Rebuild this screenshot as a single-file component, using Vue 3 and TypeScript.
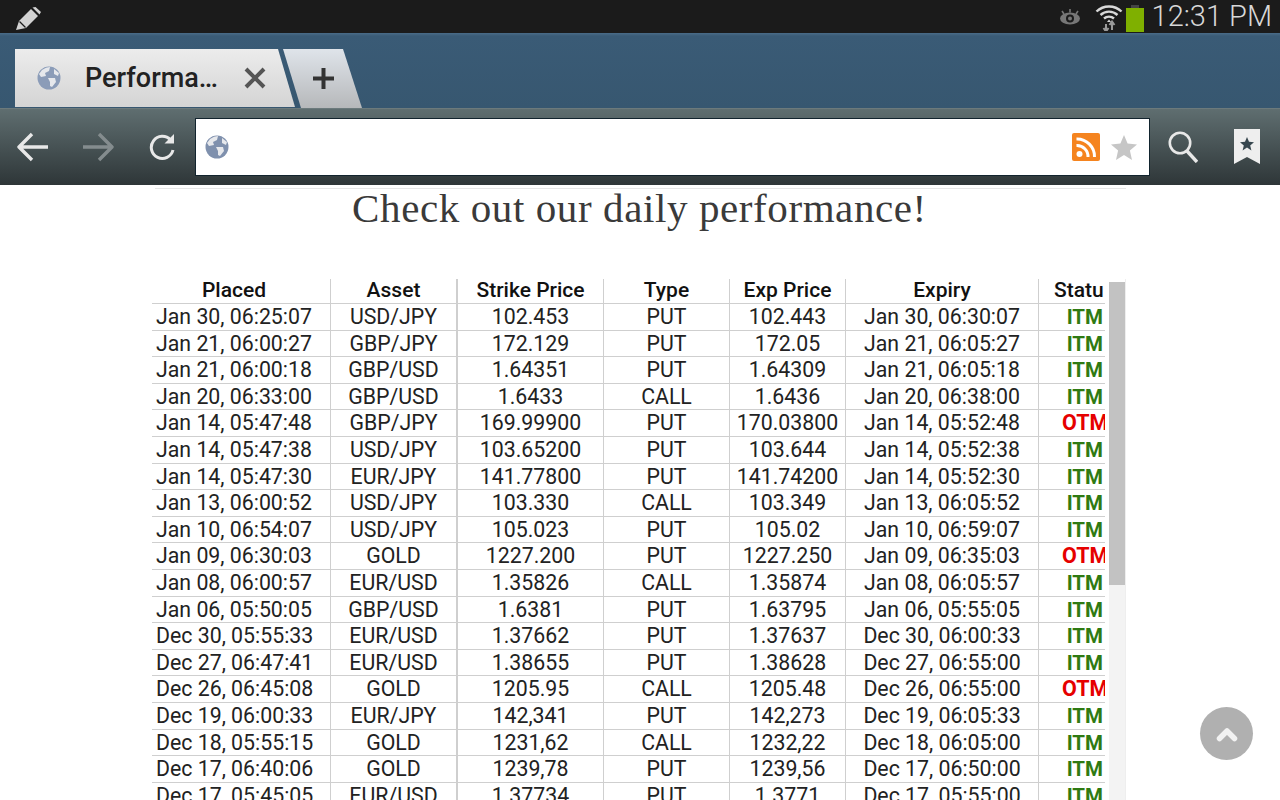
<script setup lang="ts">
// Tablet browser chrome with a trading performance table below it.
interface Row {
  placed: string
  asset: string
  strike: string
  type: string
  exp: string
  expiry: string
  status: string
  thick?: boolean
}

const rows: Row[] = [
  { placed: 'Jan 30, 06:25:07', asset: 'USD/JPY', strike: '102.453', type: 'PUT', exp: '102.443', expiry: 'Jan 30, 06:30:07', status: 'ITM' },
  { placed: 'Jan 21, 06:00:27', asset: 'GBP/JPY', strike: '172.129', type: 'PUT', exp: '172.05', expiry: 'Jan 21, 06:05:27', status: 'ITM', thick: true },
  { placed: 'Jan 21, 06:00:18', asset: 'GBP/USD', strike: '1.64351', type: 'PUT', exp: '1.64309', expiry: 'Jan 21, 06:05:18', status: 'ITM' },
  { placed: 'Jan 20, 06:33:00', asset: 'GBP/USD', strike: '1.6433', type: 'CALL', exp: '1.6436', expiry: 'Jan 20, 06:38:00', status: 'ITM', thick: true },
  { placed: 'Jan 14, 05:47:48', asset: 'GBP/JPY', strike: '169.99900', type: 'PUT', exp: '170.03800', expiry: 'Jan 14, 05:52:48', status: 'OTM' },
  { placed: 'Jan 14, 05:47:38', asset: 'USD/JPY', strike: '103.65200', type: 'PUT', exp: '103.644', expiry: 'Jan 14, 05:52:38', status: 'ITM' },
  { placed: 'Jan 14, 05:47:30', asset: 'EUR/JPY', strike: '141.77800', type: 'PUT', exp: '141.74200', expiry: 'Jan 14, 05:52:30', status: 'ITM', thick: true },
  { placed: 'Jan 13, 06:00:52', asset: 'USD/JPY', strike: '103.330', type: 'CALL', exp: '103.349', expiry: 'Jan 13, 06:05:52', status: 'ITM' },
  { placed: 'Jan 10, 06:54:07', asset: 'USD/JPY', strike: '105.023', type: 'PUT', exp: '105.02', expiry: 'Jan 10, 06:59:07', status: 'ITM' },
  { placed: 'Jan 09, 06:30:03', asset: 'GOLD', strike: '1227.200', type: 'PUT', exp: '1227.250', expiry: 'Jan 09, 06:35:03', status: 'OTM' },
  { placed: 'Jan 08, 06:00:57', asset: 'EUR/USD', strike: '1.35826', type: 'CALL', exp: '1.35874', expiry: 'Jan 08, 06:05:57', status: 'ITM' },
  { placed: 'Jan 06, 05:50:05', asset: 'GBP/USD', strike: '1.6381', type: 'PUT', exp: '1.63795', expiry: 'Jan 06, 05:55:05', status: 'ITM', thick: true },
  { placed: 'Dec 30, 05:55:33', asset: 'EUR/USD', strike: '1.37662', type: 'PUT', exp: '1.37637', expiry: 'Dec 30, 06:00:33', status: 'ITM' },
  { placed: 'Dec 27, 06:47:41', asset: 'EUR/USD', strike: '1.38655', type: 'PUT', exp: '1.38628', expiry: 'Dec 27, 06:55:00', status: 'ITM' },
  { placed: 'Dec 26, 06:45:08', asset: 'GOLD', strike: '1205.95', type: 'CALL', exp: '1205.48', expiry: 'Dec 26, 06:55:00', status: 'OTM' },
  { placed: 'Dec 19, 06:00:33', asset: 'EUR/JPY', strike: '142,341', type: 'PUT', exp: '142,273', expiry: 'Dec 19, 06:05:33', status: 'ITM' },
  { placed: 'Dec 18, 05:55:15', asset: 'GOLD', strike: '1231,62', type: 'CALL', exp: '1232,22', expiry: 'Dec 18, 06:05:00', status: 'ITM', thick: true },
  { placed: 'Dec 17, 06:40:06', asset: 'GOLD', strike: '1239,78', type: 'PUT', exp: '1239,56', expiry: 'Dec 17, 06:50:00', status: 'ITM' },
  { placed: 'Dec 17, 05:45:05', asset: 'EUR/USD', strike: '1.37734', type: 'PUT', exp: '1.3771', expiry: 'Dec 17, 05:55:00', status: 'ITM' },
]

const headers = ['Placed', 'Asset', 'Strike Price', 'Type', 'Exp Price', 'Expiry', 'Statu']
</script>

<template>
  <div class="screen">
    <header class="status-bar">
      <svg class="pencil" width="28" height="28" viewBox="0 0 28 28">
        <path d="M2 27 L5 18 L17 6 L24 13 L12 25 Z" fill="#d2d2d2" />
        <path d="M18.5 4.5 L21.5 4 L27 9 L25.5 11.5 Z" fill="#d2d2d2" />
        <path d="M5.5 18.5 L11.5 24.5" stroke="#1b1b1b" stroke-width="1.2" />
      </svg>
      <div class="status-right">
        <svg class="eye" width="24" height="20" viewBox="0 0 24 20">
          <ellipse cx="12" cy="11.5" rx="10" ry="6" fill="#777" />
          <circle cx="12" cy="11.5" r="4" fill="#1b1b1b" />
          <circle cx="12" cy="11.5" r="2" fill="#777" />
          <path d="M4 4 L6 7 M12 2 V5.5 M20 4 L18 7" stroke="#777" stroke-width="1.6" />
        </svg>
        <svg class="wifi" width="28" height="28" viewBox="0 0 28 28">
          <path d="M1.5 8.5 A18 18 0 0 1 26.5 8.5" fill="none" stroke="#d8d8d8" stroke-width="2.4" />
          <path d="M5.5 12 A12.5 12.5 0 0 1 22.5 12" fill="none" stroke="#d8d8d8" stroke-width="2.4" />
          <path d="M9 15.5 A7.5 7.5 0 0 1 19 15.5" fill="none" stroke="#d8d8d8" stroke-width="2.4" />
          <path d="M12 19 L16 19 L14 16.5 Z" fill="#d8d8d8" />
          <path d="M11 29 V21 M8.5 25 L11 28.5 L13.5 25" stroke="#999" stroke-width="2" fill="none" />
          <path d="M17 27 V19 M14.5 22 L17 18.5 L19.5 22" stroke="#999" stroke-width="2" fill="none" />
        </svg>
        <div class="battery"><span class="battery-cap" /><span class="battery-fill" /></div>
        <span class="clock">12:31 PM</span>
      </div>
    </header>

    <div class="tab-bar">
      <div class="tab">
        <svg class="globe" width="24" height="24" viewBox="0 0 24 24">
          <circle cx="12" cy="12" r="11.5" fill="#8b9cb8" />
          <path d="M5 4 Q9 1 13 1 L12 5 L8 7 L9 10 L4 11 L2 8 Z" fill="#e6e8ec" />
          <path d="M11 12 L18 12 L19 16 L15 21 L13 20 L13 16 Z" fill="#e6e8ec" />
          <path d="M17 3 L22 7 L21 10 L17 8 Z" fill="#e6e8ec" />
        </svg>
        <span class="tab-title">Performa…</span>
        <svg class="tab-close" width="22" height="22" viewBox="0 0 22 22">
          <path d="M2 2 L20 20 M20 2 L2 20" stroke="#555" stroke-width="4" />
        </svg>
      </div>
      <div class="new-tab">
        <svg width="21" height="21" viewBox="0 0 21 21">
          <path d="M10.5 0 V21 M0 10.5 H21" stroke="#333" stroke-width="4" />
        </svg>
      </div>
    </div>

    <nav class="toolbar">
      <svg class="nav-icon back" width="32" height="30" viewBox="0 0 32 30">
        <path d="M31 15 H3 M15 2 L2 15 L15 28" fill="none" stroke="#e8e8e8" stroke-width="3.4" stroke-linejoin="round" />
      </svg>
      <svg class="nav-icon forward" width="32" height="30" viewBox="0 0 32 30">
        <path d="M1 15 H29 M17 2 L30 15 L17 28" fill="none" stroke="#848c8e" stroke-width="3.4" stroke-linejoin="round" />
      </svg>
      <svg class="nav-icon reload" width="28" height="28" viewBox="0 0 28 28">
        <path d="M22.5 7 A11 11 0 1 0 25 17" fill="none" stroke="#e8e8e8" stroke-width="3" />
        <path d="M16.5 10.5 L26 10.5 L26 1 Z" fill="#e8e8e8" />
      </svg>
      <div class="url-box">
        <svg class="globe" width="24" height="24" viewBox="0 0 24 24">
          <circle cx="12" cy="12" r="11.5" fill="#7f90ad" />
          <path d="M5 4 Q9 1 13 1 L12 5 L8 7 L9 10 L4 11 L2 8 Z" fill="#e6e8ec" />
          <path d="M11 12 L18 12 L19 16 L15 21 L13 20 L13 16 Z" fill="#e6e8ec" />
          <path d="M17 3 L22 7 L21 10 L17 8 Z" fill="#e6e8ec" />
        </svg>
        <svg class="rss" width="28" height="28" viewBox="0 0 28 28">
          <rect width="28" height="28" rx="2" fill="#f5841f" />
          <circle cx="7.5" cy="21" r="3" fill="#fff" />
          <path d="M4.5 12.5 A11 11 0 0 1 16 24" fill="none" stroke="#fff" stroke-width="3" />
          <path d="M4.5 6 A17.5 17.5 0 0 1 22.5 24" fill="none" stroke="#fff" stroke-width="3" />
        </svg>
        <svg class="star" width="26" height="25" viewBox="0 0 26 25">
          <path d="M13 0 L16.6 8.6 L26 9.5 L18.9 15.6 L21 25 L13 20 L5 25 L7.100 15.6 L0 9.5 L9.400 8.6 Z" fill="#c6c6c6" />
        </svg>
      </div>
      <svg class="search" width="30" height="32" viewBox="0 0 30 32">
        <circle cx="12" cy="12" r="10.200" fill="none" stroke="#e8e8e8" stroke-width="2.6" />
        <path d="M19 20 L29 31" stroke="#e8e8e8" stroke-width="3.4" />
      </svg>
      <svg class="bookmark" width="26" height="36" viewBox="0 0 26 36">
        <path d="M0 0 H26 V35 L13 28 L0 35 Z" fill="#eeeeee" />
        <path d="M13 8 L15 12.800 L20 13.200 L16.200 16.400 L17.400 21.400 L13 18.600 L8.600 21.400 L9.800 16.400 L6 13.200 L11 12.800 Z" fill="#37474f" />
      </svg>
    </nav>

    <main class="page">
      <div class="rule" />
      <h1 class="heading">Check out our daily performance!</h1>
      <div class="table-wrap">
        <div class="table">
          <div class="row head">
            <div v-for="h in headers" :key="h" class="cell">{{ h }}</div>
          </div>
          <div v-for="r in rows" :key="r.placed + r.asset" class="row" :class="{ thick: r.thick }">
            <div class="cell left">{{ r.placed }}</div>
            <div class="cell">{{ r.asset }}</div>
            <div class="cell">{{ r.strike }}</div>
            <div class="cell">{{ r.type }}</div>
            <div class="cell">{{ r.exp }}</div>
            <div class="cell">{{ r.expiry }}</div>
            <div class="cell status" :class="r.status === 'ITM' ? 'itm' : 'otm'">{{ r.status }}</div>
          </div>
        </div>
        <div class="scrollbar"><div class="thumb" /></div>
      </div>
      <button class="to-top" aria-label="Back to top">
        <svg width="22" height="16" viewBox="0 0 22 16">
          <path d="M3.5 12.500 L11 5 L18.500 12.500" fill="none" stroke="#f2f2f2" stroke-width="5.500" stroke-linecap="round" stroke-linejoin="round" />
        </svg>
      </button>
    </main>
  </div>
</template>

<style>
html,
body {
  margin: 0;
  overflow: hidden;
  background: #fff;
}
</style>

<style scoped>
.screen {
  width: 1280px;
  height: 800px;
  display: flex;
  flex-direction: column;
  overflow: hidden;
  font-family: Roboto, "Liberation Sans", sans-serif;
}

.status-bar {
  height: 33px;
  flex: none;
  background: #1b1b1b;
  display: flex;
  align-items: center;
  justify-content: space-between;
  padding: 0 8px 0 14px;
}
.status-right {
  display: flex;
  align-items: center;
}
.eye {
  margin-right: 13px;
}
.wifi {
  margin-right: 3px;
}
.battery {
  width: 18px;
  height: 27px;
  display: flex;
  flex-direction: column;
  align-items: center;
  margin-right: 8px;
  margin-top: 3px;
}
.battery-cap {
  width: 8px;
  height: 3px;
  background: #444;
}
.battery-fill {
  width: 18px;
  flex: 1;
  background: #7fb000;
}
.clock {
  color: #d8d8d8;
  font-size: 29px;
  font-weight: 300;
  font-family: Roboto, sans-serif;
  line-height: 33px;
}

.tab-bar {
  height: 75px;
  flex: none;
  box-sizing: border-box;
  background: linear-gradient(#4a6c88 0, #3a5b76 3px, #375770 100%);
  display: flex;
  align-items: flex-end;
  padding-left: 15px;
}
.tab {
  width: 280px;
  height: 58px;
  margin-bottom: 1px;
  box-sizing: border-box;
  background: linear-gradient(#ececec, #d4d4d4);
  clip-path: polygon(0 0, 263px 0, 280px 100%, 0 100%);
  display: flex;
  align-items: center;
  padding-left: 22px;
}
.tab-title {
  font-size: 27px;
  font-weight: 500;
  color: #222;
  margin-left: 24px;
  width: 159px;
  white-space: nowrap;
}
.new-tab {
  width: 79px;
  height: 59px;
  margin-left: -12px;
  background: linear-gradient(#dfe4ea, #b6b8ba);
  clip-path: polygon(0 0, 60px 0, 79px 100%, 18px 100%);
  display: flex;
  align-items: center;
  justify-content: center;
}
.new-tab svg {
  margin-left: 2px;
}

.toolbar {
  height: 77px;
  flex: none;
  background: linear-gradient(#5f6e70, #2e3638);
  display: flex;
  align-items: center;
  padding-left: 17px;
  border-top: 1px solid #6c7a7c;
  box-sizing: border-box;
}
.nav-icon {
  margin-top: -1px;
}
.forward {
  margin-left: 33px;
}
.reload {
  margin-left: 34px;
}
.url-box {
  width: 955px;
  height: 58px;
  margin-left: 19px;
  box-sizing: border-box;
  background: #fff;
  border: 1px solid #12242e;
  display: flex;
  align-items: center;
  padding: 0 12px 0 9px;
}
.rss {
  margin-left: auto;
  margin-right: 11px;
}
.search {
  margin-left: 18px;
}
.bookmark {
  margin-left: 36px;
}

.page {
  flex: 1;
  position: relative;
  background: #fff;
  overflow: hidden;
  padding-left: 152px;
}
.rule {
  width: 971px;
  margin: 3px 0 0 3px;
  border-top: 1px solid #e6e6e6;
}
.heading {
  margin: -1px 0 0;
  width: 975px;
  text-align: center;
  font-family: "Liberation Serif", serif;
  font-size: 41px;
  font-weight: 400;
  color: #3a3a3a;
  line-height: 40px;
  letter-spacing: 0.6px;
}
.table-wrap {
  display: flex;
  width: 973px;
  margin-top: 51px;
  border-right: 1px solid #eee;
}
.table {
  width: 953px;
  flex: none;
  overflow: hidden;
  font-size: 21.3px;
  color: #222;
}
.row {
  display: grid;
  grid-template-columns: 179px 127px 146px 126px 116px 193px 66px;
  height: 26.6px;
  box-sizing: border-box;
  border-bottom: 1px solid #cfcfcf;
}
.row.thick {
  box-shadow: 0 -1px 0 #cfcfcf;
}
.row.head {
  height: 25px;
  font-weight: 500;
  font-size: 21px;
  color: #111;
}
.cell {
  text-align: center;
  line-height: 26px;
  white-space: nowrap;
  overflow: hidden;
  border-right: 1px solid #cfcfcf;
  box-sizing: border-box;
}
.cell:nth-child(2) {
  border-right-width: 2px;
}
.cell:last-child {
  border-right: 0;
}
.row.head .cell {
  line-height: 23px;
}
.row.head .cell:first-child {
  padding-right: 14px;
}
.row.head .cell:last-child {
  text-align: left;
  padding-left: 15px;
}
.cell.left {
  text-align: left;
  padding-left: 4px;
}
.status {
  font-weight: 700;
  font-size: 20.5px;
  text-align: right;
  padding-right: 2px;
}
.itm {
  color: #2f7a12;
}
.otm {
  color: #e60000;
  padding-right: 0;
  text-align: left;
  padding-left: 23px;
  font-size: 21.5px;
}
.scrollbar {
  width: 16px;
  margin-left: 4px;
  margin-top: 3px;
  background: #f3f3f3;
  flex: none;
}
.thumb {
  height: 303px;
  background: #c2c2c2;
}
.to-top {
  position: absolute;
  left: 1200px;
  top: 522px;
  width: 53px;
  height: 53px;
  padding: 0;
  border: 0;
  border-radius: 50%;
  background: #b0b0b0;
  display: flex;
  align-items: center;
  justify-content: center;
}
</style>
